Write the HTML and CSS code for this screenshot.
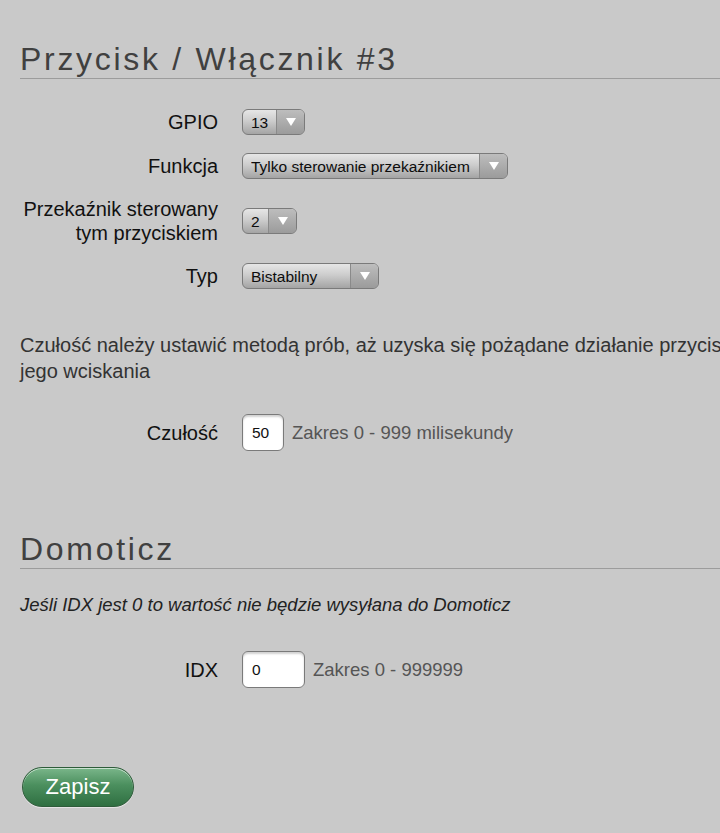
FILE: index.html
```html
<!DOCTYPE html>
<html lang="pl">
<head>
  <meta charset="UTF-8">
  <meta name="viewport" content="width=device-width, initial-scale=1.0">
  <title>Przycisk / Włącznik #3</title>
  <link rel="stylesheet" href="styles.css">
</head>
<body>
  <form class="page" action="/save" method="post">
    <h2>Przycisk / Włącznik #3</h2>
    <div class="form-grid rows">
      <label for="gpio">GPIO</label>
      <div class="select w-gpio">
        <select id="gpio" name="gpio">
          <option>13</option>
        </select>
      </div>

      <label for="funkcja">Funkcja</label>
      <div class="select w-func">
        <select id="funkcja" name="funkcja">
          <option>Tylko sterowanie przekaźnikiem</option>
        </select>
      </div>

      <label for="relay">Przekaźnik sterowany tym przyciskiem</label>
      <div class="select w-relay">
        <select id="relay" name="relay">
          <option>2</option>
        </select>
      </div>

      <label for="typ">Typ</label>
      <div class="select w-typ">
        <select id="typ" name="typ">
          <option>Bistabilny</option>
        </select>
      </div>
    </div>

    <p class="info">Czułość należy ustawić metodą prób, aż uzyska się pożądane działanie przycisku podczas jego wciskania</p>

    <div class="form-grid single">
      <label for="czulosc">Czułość</label>
      <div class="field">
        <input type="text" id="czulosc" name="czulosc" class="num w-short" value="50">
        <span class="hint">Zakres 0 - 999 milisekundy</span>
      </div>
    </div>

    <h2 class="section">Domoticz</h2>
    <p class="note">Jeśli IDX jest 0 to wartość nie będzie wysyłana do Domoticz</p>

    <div class="form-grid idx">
      <label for="idx">IDX</label>
      <div class="field">
        <input type="text" id="idx" name="idx" class="num w-long" value="0">
        <span class="hint">Zakres 0 - 999999</span>
      </div>
    </div>

    <button type="submit" class="btn-save">Zapisz</button>
  </form>
</body>
</html>
```

FILE: styles.css
```css
html, body {
  overflow-x: hidden;
}
body {
  margin: 0;
  background: #c9c9c9;
  color: #111;
  font-family: "Liberation Sans", Arial, sans-serif;
}
.page {
  width: 820px;
  padding: 0 20px 30px;
}
h2 {
  margin: 40px 0 0;
  font-size: 32px;
  line-height: 38px;
  font-weight: normal;
  letter-spacing: 2.7px;
  color: #404040;
  border-bottom: 1px solid #9c9c9c;
}
h2.section {
  margin-top: 79px;
}
.form-grid {
  display: grid;
  grid-template-columns: 198px auto;
  column-gap: 24px;
  row-gap: 18px;
  align-items: center;
  justify-items: start;
}
.form-grid label {
  justify-self: end;
  text-align: right;
  font-size: 20px;
  line-height: 24px;
}
.rows {
  margin-top: 30px;
}
.single {
  margin-top: 30px;
}
.idx {
  margin-top: 33px;
}

/* popup-style selects */
.select {
  position: relative;
  height: 26px;
}
.select select {
  -webkit-appearance: none;
  appearance: none;
  width: 100%;
  height: 26px;
  box-sizing: border-box;
  margin: 0;
  padding: 0 34px 0 8px;
  border: 1px solid #7a7a7a;
  border-radius: 6px;
  background: linear-gradient(#e6e6e6, #cdcdcd 45%, #a4a4a4);
  font-family: "Liberation Sans", Arial, sans-serif;
  font-size: 15.5px;
  color: #0d0d0d;
}
.select::after {
  content: "";
  position: absolute;
  top: 1px;
  right: 1px;
  bottom: 1px;
  width: 27px;
  border-left: 1px solid #8a8a8a;
  border-radius: 0 5px 5px 0;
  background: linear-gradient(#bdbdbd, #9b9b9b);
  pointer-events: none;
}
.select::before {
  content: "";
  position: absolute;
  top: 9px;
  right: 9px;
  z-index: 1;
  border-top: 8px solid #fff;
  border-left: 5px solid transparent;
  border-right: 5px solid transparent;
  pointer-events: none;
}
.w-gpio { width: 63px; }
.w-func { width: 266px; }
.w-relay { width: 55px; }
.w-typ { width: 137px; }

.info {
  margin: 43px 0 0;
  font-size: 20px;
  line-height: 26px;
  color: #333;
}
.note {
  margin: 23px 0 0;
  font-size: 18.5px;
  line-height: 26px;
  font-style: italic;
  color: #222;
}
.field {
  display: flex;
  align-items: center;
  gap: 8px;
}
.num {
  height: 37px;
  box-sizing: border-box;
  padding: 0 9px;
  border: 1px solid #7a7a7a;
  border-radius: 6px;
  background: #fff;
  box-shadow: inset 0 2px 2px rgba(0, 0, 0, 0.18);
  font-family: "Liberation Sans", Arial, sans-serif;
  font-size: 15.5px;
  color: #111;
}
.w-short { width: 42px; }
.w-long { width: 63px; }
.hint {
  font-size: 18.5px;
  color: #555;
}
.btn-save {
  display: block;
  margin: 79px 0 0 2px;
  width: 112px;
  height: 40px;
  border: 1px solid #2e5c3a;
  border-radius: 20px;
  background: linear-gradient(#7ab68a, #4b8f5e 45%, #2f6f41);
  box-shadow: inset 0 1px 0 rgba(255, 255, 255, 0.6), 0 1px 0 rgba(255, 255, 255, 0.5);
  color: #fff;
  font-family: "Liberation Sans", Arial, sans-serif;
  font-size: 22px;
  cursor: pointer;
}
```
